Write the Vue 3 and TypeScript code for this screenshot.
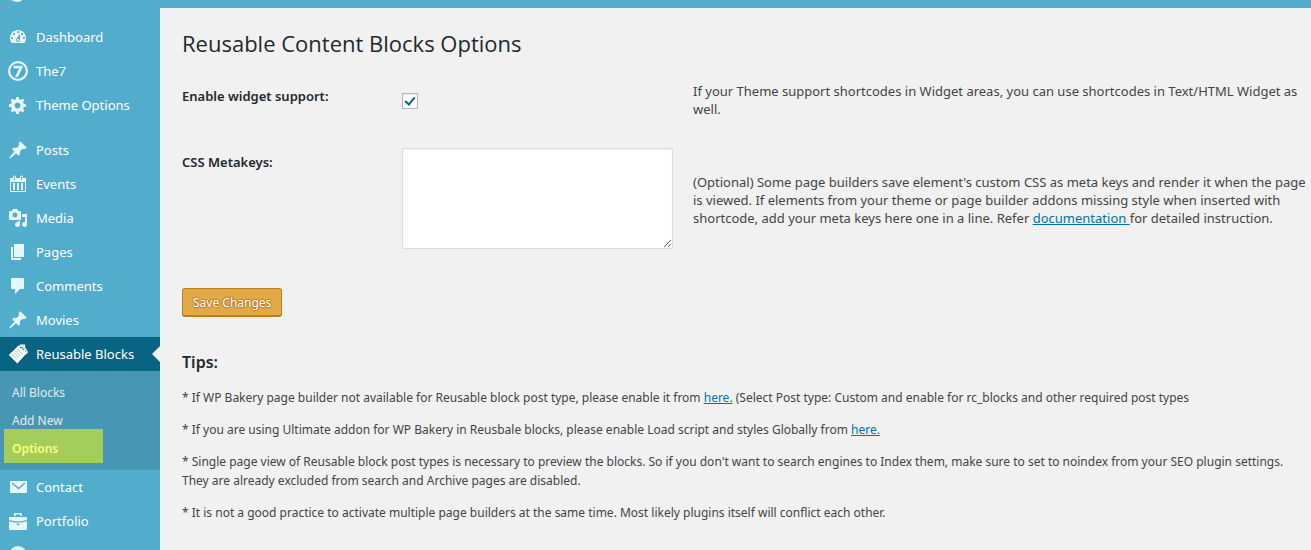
<script setup lang="ts">
import { ref } from 'vue'

interface MenuItem {
  label: string
  icon: string
  gapBefore?: boolean
  current?: boolean
}

interface SubItem {
  label: string
  current?: boolean
}

const menu: MenuItem[] = [
  { label: 'Dashboard', icon: 'dashboard' },
  { label: 'The7', icon: 'seven' },
  { label: 'Theme Options', icon: 'gear' },
  { label: 'Posts', icon: 'pin', gapBefore: true },
  { label: 'Events', icon: 'calendar' },
  { label: 'Media', icon: 'media' },
  { label: 'Pages', icon: 'pages' },
  { label: 'Comments', icon: 'comment' },
  { label: 'Movies', icon: 'pin' },
  { label: 'Reusable Blocks', icon: 'blocks', current: true },
  { label: 'Contact', icon: 'mail' },
  { label: 'Portfolio', icon: 'portfolio' },
  { label: '', icon: 'disc' },
]

const submenu: SubItem[] = [
  { label: 'All Blocks' },
  { label: 'Add New' },
  { label: 'Options', current: true },
]

const paths: Record<string, string> = {
  dashboard:
    'M3.76 16h12.48c1.1-1.37 1.76-3.11 1.76-5 0-4.42-3.58-8-8-8s-8 3.58-8 8c0 1.89.66 3.63 1.76 5zM10 4c.55 0 1 .45 1 1s-.45 1-1 1-1-.45-1-1 .45-1 1-1zM6 6c.55 0 1 .45 1 1s-.45 1-1 1-1-.45-1-1 .45-1 1-1zm8 0c.55 0 1 .45 1 1s-.45 1-1 1-1-.45-1-1 .45-1 1-1zm-5.37 5.55L12 7v6c0 1.1-.9 2-2 2s-2-.9-2-2c0-.57.24-1.08.63-1.45zM4 10c.55 0 1 .45 1 1s-.45 1-1 1-1-.45-1-1 .45-1 1-1zm12 0c.55 0 1 .45 1 1s-.45 1-1 1-1-.45-1-1 .45-1 1-1zm-5 3c0-.55-.45-1-1-1s-1 .45-1 1 .45 1 1 1 1-.45 1-1z',
  seven:
    'M10 0a10 10 0 1 0 0 20a10 10 0 1 0 0-20zM10 2.2a7.8 7.8 0 1 1 0 15.6a7.8 7.8 0 1 1 0-15.6zM5.4 4.8h9.2v2L10 15.8H7L11.2 7.6H5.4z',
  gear:
    'M18 12h-2.18c-.17.7-.44 1.35-.81 1.93l1.54 1.54-2.1 2.1-1.54-1.54c-.58.36-1.23.63-1.91.79V19H8v-2.18c-.68-.16-1.33-.43-1.91-.79l-1.54 1.54-2.12-2.12 1.54-1.54c-.36-.58-.63-1.23-.79-1.91H1V9.03h2.17c.16-.7.44-1.35.8-1.94L2.43 5.55l2.1-2.1 1.54 1.54c.58-.37 1.24-.64 1.93-.81V2h3v2.18c.68.16 1.33.43 1.91.79l1.54-1.54 2.12 2.12-1.54 1.54c.36.59.64 1.24.8 1.94H18V12zm-8.5 1.5c1.66 0 3-1.34 3-3s-1.34-3-3-3-3 1.34-3 3 1.34 3 3 3z',
  pin:
    'M10.44 3.02l1.82-1.82 6.36 6.35-1.83 1.82c-1.05-.68-2.48-.57-3.41.36l-.75.75c-.92.93-1.04 2.35-.35 3.41l-1.83 1.82-2.41-2.41-2.8 2.79c-.42.42-3.38 2.71-3.8 2.29s1.86-3.39 2.28-3.81l2.79-2.79L4.1 9.36l1.83-1.82c1.05.69 2.48.57 3.4-.36l.75-.75c.93-.92 1.05-2.35.36-3.41z',
  calendar:
    'M15 4h3v14H2V4h3V3c0-.83.67-1.5 1.5-1.5S8 2.17 8 3v1h4V3c0-.83.67-1.5 1.5-1.5S15 2.17 15 3v1zM6 3v2.5c0 .28.22.5.5.5s.5-.22.5-.5V3c0-.28-.22-.5-.5-.5S6 2.72 6 3zm7 0v2.5c0 .28.22.5.5.5s.5-.22.5-.5V3c0-.28-.22-.5-.5-.5s-.5.22-.5.5zm4 14V8H3v9h14zM7 16V9H5v7h2zm4 0V9H9v7h2zm4 0V9h-2v7h2z',
  media:
    'M13 11V4c0-.55-.45-1-1-1h-1.67L9 1H5L3.67 3H2c-.55 0-1 .45-1 1v7c0 .55.45 1 1 1h10c.55 0 1-.45 1-1zM7 4.5c1.38 0 2.5 1.12 2.5 2.5S8.38 9.5 7 9.5 4.5 8.38 4.5 7 5.62 4.5 7 4.5zM14 6h5v10.5c0 1.38-1.12 2.5-2.5 2.5S14 17.88 14 16.5s1.12-2.5 2.5-2.5c.17 0 .34.02.5.05V9h-3V6zm-4 8.05V13h2v3.5c0 1.38-1.12 2.5-2.5 2.5S7 17.88 7 16.5 8.12 14 9.5 14c.17 0 .34.02.5.05z',
  pages: 'M6 15V2h10v13H6zm-1 1h8v2H3V5h2v11z',
  comment:
    'M4 2h11c.6 0 1 .4 1 1v9c0 .6-.4 1-1 1h-3l-5 5v-5H4c-.6 0-1-.4-1-1V3c0-.6.4-1 1-1z',
  mail:
    'M3 4h15c.6 0 1 .4 1 1v10c0 .6-.4 1-1 1H3c-.6 0-1-.4-1-1V5c0-.6.4-1 1-1zM4.5 5.4L3.6 6.5L10.5 12.4L17.4 6.5L16.5 5.4L10.5 10.4z',
  portfolio:
    'M6 5V3c0-.6.4-1 1-1h6c.6 0 1 .4 1 1v2h-1.7V3.6H7.7V5zM2 6h16c.6 0 1 .4 1 1v2c-5.6 1.9-12.4 1.9-18 0V7c0-.6.4-1 1-1zM1 10.2c5.6 1.9 12.4 1.9 18 0V18c0 .6-.4 1-1 1H2c-.6 0-1-.4-1-1zM8 12.8l2 2 2-2z',
  disc: 'M10 1a9 9 0 1 0 0 18a9 9 0 1 0 0-18z',
}

const widgetSupport = ref(true)
const metaKeys = ref('')
</script>

<template>
  <div class="admin">
    <header class="topbar">
      <svg class="topbar-logo" viewBox="0 0 20 20" aria-hidden="true">
        <circle cx="10" cy="10" r="8" fill="none" stroke="currentColor" stroke-width="2" />
      </svg>
    </header>
    <div class="body">
      <nav class="sidebar" aria-label="Main menu">
        <ul class="menu">
          <li v-for="(item, i) in menu" :key="i" :class="{ gap: item.gapBefore }">
            <a href="#" class="menu-link" :class="{ current: item.current }">
              <svg class="icon" viewBox="0 0 20 20" aria-hidden="true">
                <g v-if="item.icon === 'blocks'">
                  <path d="M12 1.2h4.5v2L19.2 8l-1 2" fill="none" stroke="currentColor" stroke-width="1.3" />
                  <path d="M10.6 1.6h4.6L18.4 9.6 9.4 19.4 .8 11z" fill="currentColor" />
                  <path d="M9.2 5l5.6 5.6M7.4 6.7l5.6 5.6M5.6 8.4l5.6 5.6M3.8 10.1l5.6 5.6" fill="none" stroke="#096484" stroke-width=".7" stroke-opacity=".55" />
                  <path d="M11.8 3.4h2.6l1.2 3" fill="none" stroke="#096484" stroke-width=".9" />
                </g>
                <path v-else :d="paths[item.icon]" fill="currentColor" fill-rule="evenodd" />
              </svg>
              <span>{{ item.label }}</span>
            </a>
            <ul v-if="item.current" class="submenu">
              <li v-for="sub in submenu" :key="sub.label">
                <a href="#" class="sub-link" :class="{ selected: sub.current }">{{ sub.label }}</a>
              </li>
            </ul>
          </li>
        </ul>
      </nav>

      <main class="content">
        <h1>Reusable Content Blocks Options</h1>
        <form @submit.prevent>
          <div class="row">
            <label class="name" for="widget-support">Enable widget support:</label>
            <div class="control">
              <input id="widget-support" v-model="widgetSupport" type="checkbox" class="check" />
            </div>
            <p class="hint">
              If your Theme support shortcodes in Widget areas, you can use shortcodes in Text/HTML Widget as<br />
              well.
            </p>
          </div>
          <div class="row keys">
            <label class="name" for="meta-keys">CSS Metakeys:</label>
            <div class="control">
              <textarea id="meta-keys" v-model="metaKeys" class="keys-box"></textarea>
            </div>
            <p class="hint">
              (Optional) Some page builders save element's custom CSS as meta keys and render it when the page<br />
              is viewed. If elements from your theme or page builder addons missing style when inserted with<br />
              shortcode, add your meta keys here one in a line. Refer <a href="#">documentation&nbsp;</a>for detailed
              instruction.
            </p>
          </div>
          <button type="submit" class="save">Save Changes</button>
        </form>
        <section class="tips">
          <h2>Tips:</h2>
          <p>
            * If WP Bakery page builder not available for Reusable block post type, please enable it from
            <a href="#">here.</a> (Select Post type: Custom and enable for rc_blocks and other required post types
          </p>
          <p>
            * If you are using Ultimate addon for WP Bakery in Reusbale blocks, please enable Load script and styles
            Globally from <a href="#">here.</a>
          </p>
          <p>
            * Single page view of Reusable block post types is necessary to preview the blocks. So if you don't want to
            search engines to Index them, make sure to set to noindex from your SEO plugin settings.<br />
            They are already excluded from search and Archive pages are disabled.
          </p>
          <p>
            * It is not a good practice to activate multiple page builders at the same time. Most likely plugins itself
            will conflict each other.
          </p>
        </section>
      </main>
    </div>
  </div>
</template>

<style>
body {
  margin: 0;
  background: #f1f1f1;
}
</style>

<style scoped>
.admin {
  display: flex;
  flex-direction: column;
  height: 100vh;
  overflow: hidden;
  color: #444;
  background: #f1f1f1;
  font-family: 'Noto Sans', 'Open Sans', sans-serif;
  font-size: 12px;
}
ul {
  margin: 0;
  padding: 0;
  list-style: none;
}
.topbar {
  display: flex;
  align-items: flex-end;
  flex: none;
  height: 8px;
  padding-left: 7px;
  overflow: hidden;
  color: #e5f8ff;
  background: #52accc;
}
.topbar-logo {
  flex: none;
  width: 20px;
  height: 20px;
  margin-bottom: 5px;
}
.body {
  display: flex;
  flex: 1;
  min-height: 0;
}
.sidebar {
  flex: none;
  width: 160px;
  padding-top: 12px;
  overflow: hidden;
  background: #52accc;
}
.gap {
  margin-top: 11px;
}
.menu-link {
  position: relative;
  display: flex;
  align-items: center;
  gap: 8px;
  height: 34px;
  padding-left: 8px;
  color: #fff;
  font-size: 13px;
  white-space: nowrap;
  text-decoration: none;
}
.icon {
  flex: none;
  width: 20px;
  height: 20px;
  color: #e5f8ff;
}
.current {
  background: #096484;
}
.current .icon {
  color: #fff;
}
.current::after {
  content: '';
  position: absolute;
  top: 9px;
  right: 0;
  border: 8px solid transparent;
  border-left-width: 0;
  border-right-color: #f1f1f1;
}
.submenu {
  padding: 8px 0 7px;
  background: #4796b3;
}
.sub-link {
  position: relative;
  z-index: 0;
  display: block;
  padding-left: 12px;
  color: #e2ecf1;
  font-size: 12px;
  line-height: 28px;
  text-decoration: none;
}
.selected {
  color: #fdfd7c;
  font-weight: 600;
}
.selected::before {
  content: '';
  position: absolute;
  z-index: -1;
  top: -6px;
  left: 4px;
  width: 99px;
  height: 34px;
  background: #a5cd5b;
}
.content {
  flex: 1;
  min-width: 0;
  padding: 19px 0 0 22px;
  white-space: nowrap;
}
h1 {
  margin: 0;
  color: #23282d;
  font-family: 'Open Sans', 'Noto Sans', sans-serif;
  font-size: 22px;
  font-weight: 400;
  line-height: 32px;
}
.row {
  display: grid;
  grid-template-columns: 220px 271px 1fr;
  align-items: start;
  margin-top: 23px;
}
.keys {
  margin-top: 30px;
}
.name {
  padding-top: 4px;
  color: #23282d;
  font-size: 13px;
  font-weight: 600;
  line-height: 20px;
}
.control {
  display: flex;
}
.hint {
  margin: 0;
  padding-left: 20px;
  font-size: 13px;
  line-height: 18px;
}
.keys .hint {
  padding-top: 25px;
}
.check {
  position: relative;
  width: 16px;
  height: 16px;
  margin: 11px 0 0;
  appearance: none;
  border: 1px solid #b4b9be;
  background: #fff;
  box-shadow: inset 0 1px 2px rgba(0, 0, 0, 0.1);
}
.check:checked::before {
  content: '';
  position: absolute;
  top: 1px;
  left: 4px;
  width: 4px;
  height: 8px;
  border: solid #096484;
  border-width: 0 2px 2px 0;
  transform: rotate(40deg);
}
.keys-box {
  box-sizing: border-box;
  width: 100%;
  height: 101px;
  margin: 0;
  border: 1px solid #ddd;
  background: #fff;
  box-shadow: inset 0 1px 2px rgba(0, 0, 0, 0.07);
  font: inherit;
  resize: both;
}
a {
  color: #0073aa;
}
.save {
  display: block;
  height: 29px;
  margin-top: 39px;
  padding: 0 10px;
  border: 1px solid #bd7d17;
  border-bottom-width: 2px;
  border-radius: 3px;
  color: #fff;
  background: #e1a948;
  font: inherit;
  text-shadow: 0 -1px 1px #bd7d17, 1px 0 1px #bd7d17, 0 1px 1px #bd7d17, -1px 0 1px #bd7d17;
}
.tips {
  margin-top: 33px;
}
h2 {
  margin: 0 0 14px;
  color: #23282d;
  font-size: 16px;
  font-weight: 600;
  line-height: 24px;
}
.tips p {
  margin: 0 0 13px;
  line-height: 19px;
}
</style>
